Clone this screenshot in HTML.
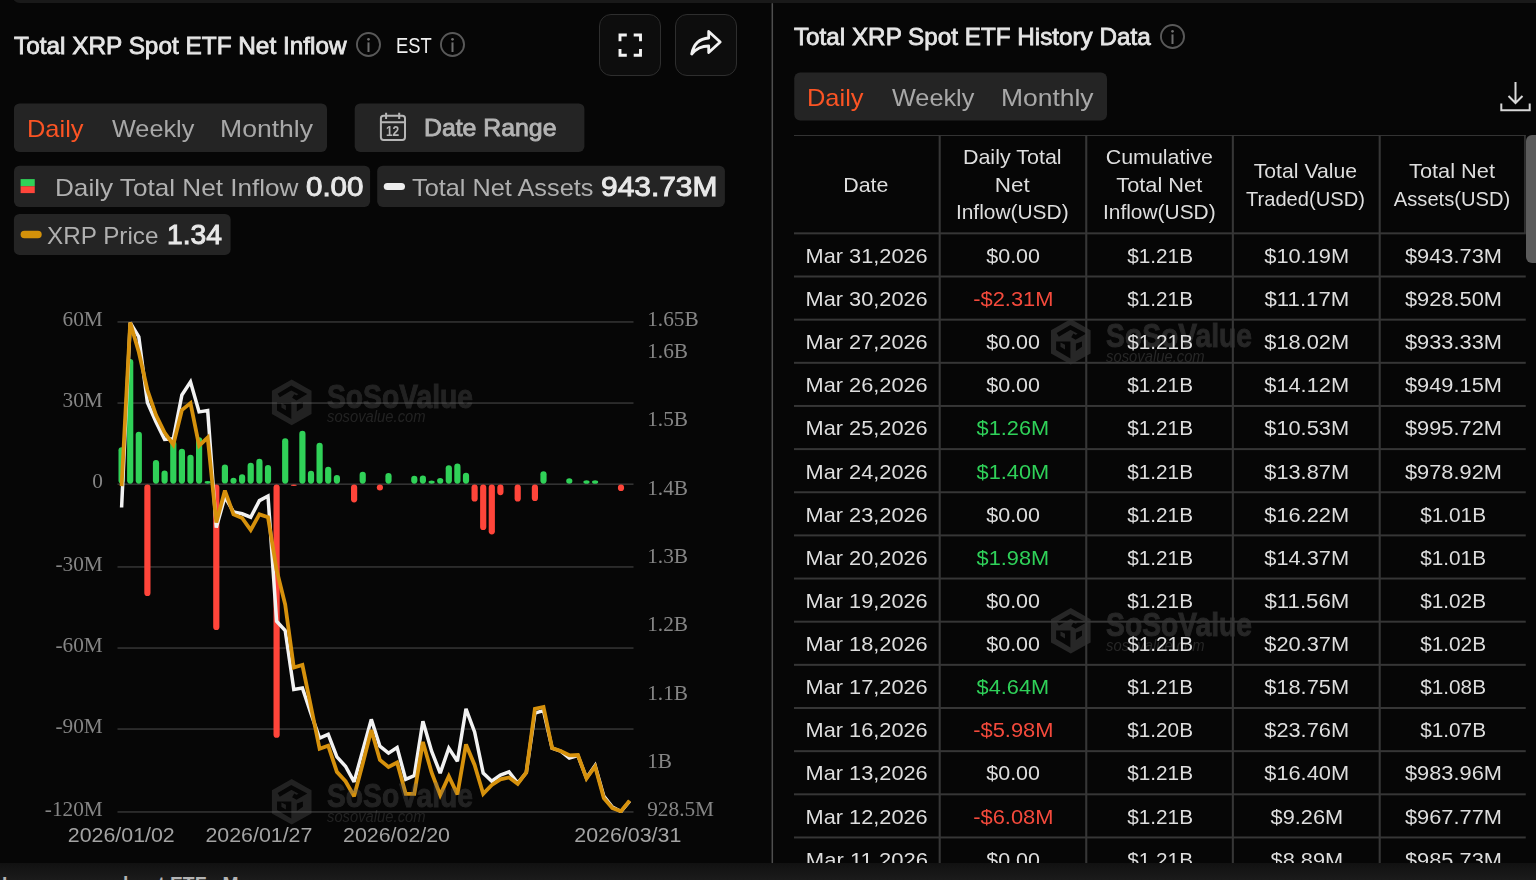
<!DOCTYPE html>
<html lang="en"><head><meta charset="utf-8"><title>Total XRP Spot ETF Net Inflow</title>
<style>
*{box-sizing:border-box;margin:0;padding:0}
html,body{width:1536px;height:880px;overflow:hidden;background:#060606}
body{position:relative;font-family:"Liberation Sans",sans-serif;color:#e4e4e4}
.abs{position:absolute}
.topbar{position:absolute;left:12px;top:-6px;width:1540px;height:9px;background:#191919;border-radius:0 0 0 8px}
.botbar{position:absolute;left:0;top:862.5px;width:1536px;height:20px;background:linear-gradient(#111111,#1b1b1b 17px);z-index:20}
.vdiv{position:absolute;left:771.6px;top:3px;width:1.8px;height:860px;background:#363636}
.t{position:absolute;z-index:3;font-weight:normal;white-space:nowrap;line-height:1;transform-origin:0 0;font-family:"Liberation Sans",sans-serif}
.b{font-weight:bold}
.pill{position:absolute;background:#242424;border-radius:5px}
.ibtn{position:absolute;width:62px;height:62px;top:14px;border:1.5px solid #2e2e2e;border-radius:12px;background:#0d0d0d}
.ibtn svg{position:absolute;left:0;top:0}
.info{position:absolute;width:25px;height:25px}
svg.chart{position:absolute;left:0;top:270px}
svg .ax{font-family:"Liberation Serif",serif;font-size:21.3px;fill:#858585}
svg .axx{font-family:"Liberation Sans",sans-serif;font-size:19.8px;fill:#a3a3a3}
svg .wm1{font-family:"Liberation Sans",sans-serif;font-weight:bold;font-size:32.6px}
svg .wm2{font-family:"Liberation Sans",sans-serif;font-style:italic;font-size:16.3px}
svg.twm{position:absolute;z-index:0}
.tblwrap{position:absolute;left:794.25px;top:135.4px;width:742px;height:740px;overflow:hidden}
table.hist{border-collapse:collapse;table-layout:fixed;width:731.75px;position:relative;z-index:2}
table.hist th,table.hist td{border:0;text-align:center;font-weight:normal;font-size:20.9px;color:#dedede;padding:0}
table.hist th{height:98.35px;line-height:27.7px;vertical-align:middle;padding-top:0}
.hl{display:block;white-space:nowrap;position:relative;left:-0.9px}
.cv{display:inline-block;white-space:nowrap}
table.hist td{height:43.15px;line-height:24px;vertical-align:middle;padding-top:1px}
table.hist td.neg{color:#f44a3c}
table.hist td.pos{color:#2fd159}
svg.tlines{position:absolute;left:0;top:0;z-index:3}
.sbar{position:absolute;left:1525.6px;top:134.5px;width:16px;height:128.5px;background:#5b5b5b;border-radius:6px;z-index:5}

section{will-change:transform}

</style></head>
<body>
<div class="topbar"></div>
<svg class="abs" style="left:760px;top:0" width="24" height="864" viewBox="0 0 24 864"><rect x="11.55" y="3.2" width="1.5" height="860" fill="#4e4e4e"/></svg>

<!-- pills / legend markers -->
<svg class="abs" style="left:0;top:0" width="1536" height="270" viewBox="0 0 1536 270"><rect x="13.95" y="103.4" width="313.05" height="48.50" rx="5.6" fill="#242424"/><rect x="354.7" y="103.4" width="229.70" height="48.50" rx="5.6" fill="#242424"/><rect x="14" y="165.7" width="356.10" height="41.20" rx="5.6" fill="#242424"/><rect x="377.2" y="165.7" width="347.70" height="41.20" rx="5.6" fill="#242424"/><rect x="13.9" y="213.9" width="216.70" height="41.10" rx="5.6" fill="#242424"/><rect x="794.25" y="72.4" width="312.75" height="48.10" rx="6" fill="#242424"/><rect x="20.6" y="179.1" width="14.15" height="7.15" fill="#30d158"/><rect x="20.6" y="186.25" width="14.15" height="6.85" fill="#ff453a"/><rect x="383.75" y="182.9" width="21.25" height="7.1" rx="3.55" fill="#ededed"/><rect x="20.6" y="230.75" width="21.1" height="7.5" rx="3.75" fill="#d4920a"/></svg>
<!-- LEFT PANEL -->
<section class="left">
<h2 class="t" style="left:14.25px;top:33.50px;font-size:24.0px;color:#e6e6e6;transform:scaleX(1.0149);-webkit-text-stroke:0.8px #e6e6e6">Total XRP Spot ETF Net Inflow</h2>
<span class="t" style="left:396.38px;top:34.55px;font-size:22.5px;color:#f0f0f0;transform:scaleX(0.8158)">EST</span>
<span class="t" style="left:27.32px;top:117.28px;font-size:24.0px;color:#fb5424;transform:scaleX(1.0594)">Daily</span>
<span class="t" style="left:111.65px;top:117.28px;font-size:24.0px;color:#a8a8a8;transform:scaleX(1.0514)">Weekly</span>
<span class="t" style="left:219.99px;top:117.28px;font-size:24.0px;color:#a8a8a8;transform:scaleX(1.1068)">Monthly</span>
<span class="t" style="left:424.47px;top:116.16px;font-size:24.0px;color:#b4b4b4;transform:scaleX(1.0340);-webkit-text-stroke:0.9px #b4b4b4">Date Range</span>
<span class="t" style="left:55.21px;top:176.56px;font-size:23.2px;color:#b0b0b0;transform:scaleX(1.1266)">Daily Total Net Inflow</span>
<span class="t" style="left:306.10px;top:172.91px;font-size:28.0px;color:#e8e8e8;transform:scaleX(1.0536);-webkit-text-stroke:1.0px #e8e8e8">0.00</span>
<span class="t" style="left:412.25px;top:176.56px;font-size:23.2px;color:#b0b0b0;transform:scaleX(1.0910)">Total Net Assets</span>
<span class="t" style="left:600.93px;top:172.52px;font-size:28.0px;color:#e8e8e8;transform:scaleX(1.0681);-webkit-text-stroke:1.0px #e8e8e8">943.73M</span>
<span class="t" style="left:47.48px;top:224.97px;font-size:23.2px;color:#b0b0b0;transform:scaleX(1.0463)">XRP Price</span>
<span class="t" style="left:167.34px;top:220.80px;font-size:28.0px;color:#e8e8e8;transform:scaleX(1.0081);-webkit-text-stroke:1.0px #e8e8e8">1.34</span>
  <svg class="info" style="left:356px;top:32.4px" viewBox="0 0 25 25"><circle cx="12.5" cy="12.5" r="11.55" fill="none" stroke="#595959" stroke-width="1.9"/><rect x="11.5" y="10.4" width="2" height="9.6" fill="#707070"/><circle cx="12.5" cy="7.3" r="1.35" fill="#707070"/></svg>
  <svg class="info" style="left:439.7px;top:32.4px" viewBox="0 0 25 25"><circle cx="12.5" cy="12.5" r="11.55" fill="none" stroke="#595959" stroke-width="1.9"/><rect x="11.5" y="10.4" width="2" height="9.6" fill="#707070"/><circle cx="12.5" cy="7.3" r="1.35" fill="#707070"/></svg>

  <div class="ibtn" style="left:599.3px">
    <svg width="60" height="60" viewBox="0 0 60 60"><path d="M20 26.3V20h6.8 M33.7 20H40.5v6.3 M40.5 34V40.3h-6.8 M26.8 40.3H20v-6.3" fill="none" stroke="#f2f2f2" stroke-width="2.9"/></svg>
  </div>
  <div class="ibtn" style="left:675px">
    <svg width="60" height="60" viewBox="1.3 1 60 60"><path d="M17 40 C19 30 25 24.5 34 24 V17.5 L45.5 28 L34 38.5 V32 C27 32 21.5 34.5 17 40 Z" fill="none" stroke="#f2f2f2" stroke-width="2.8" stroke-linejoin="round"/></svg>
  </div>
  <svg class="abs" style="left:378px;top:112px;z-index:3" width="30" height="30" viewBox="0 0 30 30"><rect x="2.9" y="3.7" width="24.1" height="24.2" rx="2.6" fill="none" stroke="#b6b6b6" stroke-width="2"/><path d="M2.9 10.3H27 M8.1 0.8V6.9 M21.2 0.8V6.9" stroke="#b6b6b6" stroke-width="2" fill="none"/><text x="7.9" y="23.9" textLength="13.3" lengthAdjust="spacingAndGlyphs" style="font-family:'Liberation Sans',sans-serif;font-size:14.6px;font-weight:bold" fill="#b6b6b6">12</text></svg>

<svg class="chart" width="772" height="600" viewBox="0 270 772 600">
<rect x="117.5" y="321.3" width="516" height="1.3" fill="#3d3d3d"/>
<rect x="117.5" y="402.4" width="516" height="1.3" fill="#3d3d3d"/>
<rect x="117.5" y="483.5" width="516" height="1.3" fill="#3d3d3d"/>
<rect x="117.5" y="566.3" width="516" height="1.3" fill="#3d3d3d"/>
<rect x="117.5" y="647.4" width="516" height="1.3" fill="#3d3d3d"/>
<rect x="117.5" y="728.4" width="516" height="1.3" fill="#3d3d3d"/>
<rect x="117.5" y="811.3" width="516" height="1.3" fill="#3d3d3d"/>
<rect x="118.5" y="447.2" width="6.2" height="36.5" rx="3.1" ry="3.1" fill="#30d158"/>
<rect x="127.1" y="359.1" width="6.2" height="124.6" rx="3.1" ry="3.1" fill="#30d158"/>
<rect x="135.7" y="431.7" width="6.2" height="52.0" rx="3.1" ry="3.1" fill="#30d158"/>
<rect x="144.3" y="484.6" width="6.2" height="111.4" rx="3.1" ry="3.1" fill="#ff453a"/>
<rect x="152.9" y="460.1" width="6.2" height="23.6" rx="3.1" ry="3.1" fill="#30d158"/>
<rect x="161.5" y="470.6" width="6.2" height="13.1" rx="3.1" ry="3.1" fill="#30d158"/>
<rect x="170.2" y="440.7" width="6.2" height="43.0" rx="3.1" ry="3.1" fill="#30d158"/>
<rect x="178.8" y="448.7" width="6.2" height="35.0" rx="3.1" ry="3.1" fill="#30d158"/>
<rect x="187.4" y="454.7" width="6.2" height="29.0" rx="3.1" ry="3.1" fill="#30d158"/>
<rect x="196.0" y="437.2" width="6.2" height="46.5" rx="3.1" ry="3.1" fill="#30d158"/>
<rect x="204.6" y="480.9" width="6.2" height="2.8" rx="3.1" ry="1.4" fill="#30d158"/>
<rect x="213.2" y="484.6" width="6.2" height="145.4" rx="3.1" ry="3.1" fill="#ff453a"/>
<rect x="221.8" y="464.4" width="6.2" height="19.2" rx="3.1" ry="3.1" fill="#30d158"/>
<rect x="230.4" y="477.8" width="6.2" height="5.9" rx="3.1" ry="3.0" fill="#30d158"/>
<rect x="239.0" y="474.3" width="6.2" height="9.4" rx="3.1" ry="3.1" fill="#30d158"/>
<rect x="247.6" y="462.8" width="6.2" height="20.9" rx="3.1" ry="3.1" fill="#30d158"/>
<rect x="256.3" y="458.8" width="6.2" height="24.9" rx="3.1" ry="3.1" fill="#30d158"/>
<rect x="264.9" y="464.9" width="6.2" height="18.8" rx="3.1" ry="3.1" fill="#30d158"/>
<rect x="273.5" y="484.6" width="6.2" height="253.2" rx="3.1" ry="3.1" fill="#ff453a"/>
<rect x="282.1" y="438.3" width="6.2" height="45.4" rx="3.1" ry="3.1" fill="#30d158"/>
<rect x="290.7" y="484.6" width="6.2" height="1.5" rx="3.1" ry="0.8" fill="#ff453a"/>
<rect x="299.3" y="430.8" width="6.2" height="52.9" rx="3.1" ry="3.1" fill="#30d158"/>
<rect x="307.9" y="470.8" width="6.2" height="12.9" rx="3.1" ry="3.1" fill="#30d158"/>
<rect x="316.5" y="442.7" width="6.2" height="41.0" rx="3.1" ry="3.1" fill="#30d158"/>
<rect x="325.1" y="466.8" width="6.2" height="16.9" rx="3.1" ry="3.1" fill="#30d158"/>
<rect x="333.8" y="475.0" width="6.2" height="8.7" rx="3.1" ry="3.1" fill="#30d158"/>
<rect x="351.0" y="484.6" width="6.2" height="17.8" rx="3.1" ry="3.1" fill="#ff453a"/>
<rect x="359.6" y="471.8" width="6.2" height="11.9" rx="3.1" ry="3.1" fill="#30d158"/>
<rect x="376.8" y="484.6" width="6.2" height="5.9" rx="3.1" ry="3.0" fill="#ff453a"/>
<rect x="385.4" y="473.1" width="6.2" height="10.6" rx="3.1" ry="3.1" fill="#30d158"/>
<rect x="411.2" y="475.8" width="6.2" height="7.9" rx="3.1" ry="3.1" fill="#30d158"/>
<rect x="419.8" y="475.6" width="6.2" height="8.1" rx="3.1" ry="3.1" fill="#30d158"/>
<rect x="428.5" y="480.5" width="6.2" height="3.2" rx="3.1" ry="1.6" fill="#30d158"/>
<rect x="437.1" y="478.0" width="6.2" height="5.7" rx="3.1" ry="2.9" fill="#30d158"/>
<rect x="445.7" y="465.2" width="6.2" height="18.5" rx="3.1" ry="3.1" fill="#30d158"/>
<rect x="454.3" y="463.6" width="6.2" height="20.1" rx="3.1" ry="3.1" fill="#30d158"/>
<rect x="462.9" y="472.7" width="6.2" height="11.0" rx="3.1" ry="3.1" fill="#30d158"/>
<rect x="471.5" y="484.6" width="6.2" height="16.9" rx="3.1" ry="3.1" fill="#ff453a"/>
<rect x="480.1" y="484.6" width="6.2" height="45.5" rx="3.1" ry="3.1" fill="#ff453a"/>
<rect x="488.7" y="484.6" width="6.2" height="49.8" rx="3.1" ry="3.1" fill="#ff453a"/>
<rect x="497.3" y="484.6" width="6.2" height="10.6" rx="3.1" ry="3.1" fill="#ff453a"/>
<rect x="514.6" y="484.6" width="6.2" height="16.9" rx="3.1" ry="3.1" fill="#ff453a"/>
<rect x="531.8" y="484.6" width="6.2" height="16.5" rx="3.1" ry="3.1" fill="#ff453a"/>
<rect x="540.4" y="471.2" width="6.2" height="12.5" rx="3.1" ry="3.1" fill="#30d158"/>
<rect x="566.2" y="478.3" width="6.2" height="5.4" rx="3.1" ry="2.7" fill="#30d158"/>
<rect x="583.4" y="480.2" width="6.2" height="3.5" rx="3.1" ry="1.8" fill="#30d158"/>
<rect x="592.0" y="480.2" width="6.2" height="3.5" rx="3.1" ry="1.8" fill="#30d158"/>
<rect x="617.9" y="484.6" width="6.2" height="6.5" rx="3.1" ry="3.1" fill="#ff453a"/>
<clipPath id="gc"><rect x="110" y="320.9" width="530" height="492"/></clipPath><g clip-path="url(#gc)">
<polyline fill="none" stroke="#f2f2f2" stroke-width="3.5" stroke-linejoin="miter" stroke-miterlimit="2.6" points="121.6,507.5 130.2,322.6 138.8,336.9 147.4,402.5 156.0,422.0 164.6,439.4 173.3,438.8 181.9,395.0 190.5,381.9 199.1,411.9 207.7,410.6 216.3,527.5 224.9,497.0 233.5,511.9 242.1,513.8 250.7,517.2 259.4,500.6 268.0,496.0 276.6,621.2 285.2,630.6 293.8,689.4 302.4,688.0 311.0,713.8 319.6,738.1 328.2,734.4 336.9,756.9 345.5,766.2 354.1,781.9 362.7,750.6 371.3,719.4 379.9,746.2 388.5,753.1 397.1,747.5 405.7,779.4 414.3,775.6 422.9,721.2 431.6,751.2 440.2,773.1 448.8,748.1 457.4,761.2 466.0,708.8 474.6,731.9 483.2,773.1 491.8,781.2 500.4,775.0 509.0,771.9 517.7,783.1 526.3,772.5 534.9,713.1 543.5,710.6 552.1,748.1 560.7,751.2 569.3,758.1 577.9,755.6 586.5,778.1 595.1,765.6 603.8,796.2 612.4,807.0 621.0,811.5 629.6,801.2"/>
<polyline fill="none" stroke="#d6910c" stroke-width="3.8" stroke-linejoin="miter" stroke-miterlimit="2.6" points="121.6,486.2 130.2,322.6 138.8,352.0 147.4,390.0 156.0,415.0 164.6,432.5 173.3,444.7 181.9,410.0 190.5,403.1 199.1,445.7 207.7,437.6 216.3,522.5 224.9,490.6 233.5,514.4 242.1,518.0 250.7,530.0 259.4,514.4 268.0,517.2 276.6,570.0 285.2,604.5 293.8,667.5 302.4,665.0 311.0,706.9 319.6,748.8 328.2,745.6 336.9,771.9 345.5,781.2 354.1,796.2 362.7,763.8 371.3,730.0 379.9,760.0 388.5,766.9 397.1,762.5 405.7,793.8 414.3,793.8 422.9,741.9 431.6,772.5 440.2,795.0 448.8,776.2 457.4,794.4 466.0,744.4 474.6,765.0 483.2,793.8 491.8,785.0 500.4,779.4 509.0,777.5 517.7,783.8 526.3,772.5 534.9,708.8 543.5,706.9 552.1,748.1 560.7,751.0 569.3,755.3 577.9,755.0 586.5,778.4 595.1,766.5 603.8,798.1 612.4,808.1 621.0,811.2 629.6,800.6"/>
</g>
<g transform="translate(271.9,379.6)" opacity="0.3"><mask id="wmk1" maskUnits="userSpaceOnUse" x="-1" y="-1" width="42" height="48"><polygon points="19.8,0 39.6,11.2 39.6,34.4 19.8,45.6 0,34.4 0,11.2" fill="#fff"/><polyline points="6.8,15.9 19.4,8.4 31,14.5 24.6,18.3 21.3,16.4" fill="none" stroke="#000" stroke-width="4.3" stroke-linejoin="miter"/><polygon points="5.1,22.4 19.4,22.4 19.4,39.4 5.1,30.9" fill="#000"/><polygon points="9.5,23.4 14,25.8 14,30.6 9.5,27.8" fill="#fff"/><polygon points="24.9,24.4 31,22.4 31,27.8 24.9,31.9" fill="#000"/></mask><rect x="-1" y="-1" width="42" height="48" fill="#646464" mask="url(#wmk1)"/><text x="55.1" y="27.9" class="wm1" fill="#646464" stroke="#646464" stroke-width="1" textLength="146" lengthAdjust="spacingAndGlyphs">SoSoValue</text><text x="55.1" y="42.7" class="wm2" fill="#646464" textLength="98.6" lengthAdjust="spacingAndGlyphs">sosovalue.com</text></g>
<g transform="translate(271.9,779)" opacity="0.3"><mask id="wmk2" maskUnits="userSpaceOnUse" x="-1" y="-1" width="42" height="48"><polygon points="19.8,0 39.6,11.2 39.6,34.4 19.8,45.6 0,34.4 0,11.2" fill="#fff"/><polyline points="6.8,15.9 19.4,8.4 31,14.5 24.6,18.3 21.3,16.4" fill="none" stroke="#000" stroke-width="4.3" stroke-linejoin="miter"/><polygon points="5.1,22.4 19.4,22.4 19.4,39.4 5.1,30.9" fill="#000"/><polygon points="9.5,23.4 14,25.8 14,30.6 9.5,27.8" fill="#fff"/><polygon points="24.9,24.4 31,22.4 31,27.8 24.9,31.9" fill="#000"/></mask><rect x="-1" y="-1" width="42" height="48" fill="#646464" mask="url(#wmk2)"/><text x="55.1" y="27.9" class="wm1" fill="#646464" stroke="#646464" stroke-width="1" textLength="146" lengthAdjust="spacingAndGlyphs">SoSoValue</text><text x="55.1" y="42.7" class="wm2" fill="#646464" textLength="98.6" lengthAdjust="spacingAndGlyphs">sosovalue.com</text></g>
<text x="102.8" y="326.1" text-anchor="end" class="ax">60M</text>
<text x="102.8" y="407.2" text-anchor="end" class="ax">30M</text>
<text x="102.8" y="488.3" text-anchor="end" class="ax">0</text>
<text x="102.8" y="571.1" text-anchor="end" class="ax">-30M</text>
<text x="102.8" y="652.2" text-anchor="end" class="ax">-60M</text>
<text x="102.8" y="733.2" text-anchor="end" class="ax">-90M</text>
<text x="102.8" y="816.1" text-anchor="end" class="ax">-120M</text>
<text x="647.2" y="326.1" class="ax">1.65B</text>
<text x="647.2" y="357.9" class="ax">1.6B</text>
<text x="647.2" y="426.2" class="ax">1.5B</text>
<text x="647.2" y="494.6" class="ax">1.4B</text>
<text x="647.2" y="563.0" class="ax">1.3B</text>
<text x="647.2" y="631.4" class="ax">1.2B</text>
<text x="647.2" y="699.8" class="ax">1.1B</text>
<text x="647.2" y="768.2" class="ax">1B</text>
<text x="647.2" y="816.1" class="ax">928.5M</text>
<text x="67.75" y="842.3" class="axx" textLength="107" lengthAdjust="spacingAndGlyphs">2026/01/02</text>
<text x="205.40" y="842.3" class="axx" textLength="107" lengthAdjust="spacingAndGlyphs">2026/01/27</text>
<text x="343.00" y="842.3" class="axx" textLength="107" lengthAdjust="spacingAndGlyphs">2026/02/20</text>
<text x="574.30" y="842.3" class="axx" textLength="107" lengthAdjust="spacingAndGlyphs">2026/03/31</text>
</svg>
</section>

<!-- RIGHT PANEL -->
<section class="right">
<h2 class="t" style="left:794.25px;top:24.98px;font-size:24.0px;color:#e6e6e6;transform:scaleX(1.0102);-webkit-text-stroke:0.8px #e6e6e6">Total XRP Spot ETF History Data</h2>
<span class="t" style="left:806.87px;top:85.88px;font-size:24.0px;color:#fb5424;transform:scaleX(1.0594)">Daily</span>
<span class="t" style="left:891.70px;top:85.88px;font-size:24.0px;color:#a8a8a8;transform:scaleX(1.0514)">Weekly</span>
<span class="t" style="left:1000.97px;top:85.89px;font-size:24.0px;color:#a8a8a8;transform:scaleX(1.1015)">Monthly</span>
  <svg class="info" style="left:1160px;top:23.5px" viewBox="0 0 25 25"><circle cx="12.5" cy="12.5" r="11.55" fill="none" stroke="#595959" stroke-width="1.9"/><rect x="11.5" y="10.4" width="2" height="9.6" fill="#707070"/><circle cx="12.5" cy="7.3" r="1.35" fill="#707070"/></svg>
  <svg class="abs" style="left:1498px;top:79px" width="36" height="36" viewBox="0 0 36 36"><path d="M17.5 3V23.5 M10.5 17 L17.5 24 L24.5 17 M3.3 24.5V31.3H31.7V24.5" fill="none" stroke="#d8d8d8" stroke-width="2"/></svg>
  <svg class="twm" style="left:1051.25px;top:319.4px" width="220" height="50" viewBox="0 0 220 50"><g transform="translate(0,0)" opacity="1"><mask id="wmk3" maskUnits="userSpaceOnUse" x="-1" y="-1" width="42" height="48"><polygon points="19.8,0 39.6,11.2 39.6,34.4 19.8,45.6 0,34.4 0,11.2" fill="#fff"/><polyline points="6.8,15.9 19.4,8.4 31,14.5 24.6,18.3 21.3,16.4" fill="none" stroke="#000" stroke-width="4.3" stroke-linejoin="miter"/><polygon points="5.1,22.4 19.4,22.4 19.4,39.4 5.1,30.9" fill="#000"/><polygon points="9.5,23.4 14,25.8 14,30.6 9.5,27.8" fill="#fff"/><polygon points="24.9,24.4 31,22.4 31,27.8 24.9,31.9" fill="#000"/></mask><rect x="-1" y="-1" width="42" height="48" fill="#272727" mask="url(#wmk3)"/><text x="55.1" y="27.9" class="wm1" fill="#272727" stroke="#272727" stroke-width="1" textLength="146" lengthAdjust="spacingAndGlyphs">SoSoValue</text><text x="55.1" y="42.7" class="wm2" fill="#272727" textLength="98.6" lengthAdjust="spacingAndGlyphs">sosovalue.com</text></g></svg>
  <svg class="twm" style="left:1051.25px;top:607.5px" width="220" height="50" viewBox="0 0 220 50"><g transform="translate(0,0)" opacity="1"><mask id="wmk4" maskUnits="userSpaceOnUse" x="-1" y="-1" width="42" height="48"><polygon points="19.8,0 39.6,11.2 39.6,34.4 19.8,45.6 0,34.4 0,11.2" fill="#fff"/><polyline points="6.8,15.9 19.4,8.4 31,14.5 24.6,18.3 21.3,16.4" fill="none" stroke="#000" stroke-width="4.3" stroke-linejoin="miter"/><polygon points="5.1,22.4 19.4,22.4 19.4,39.4 5.1,30.9" fill="#000"/><polygon points="9.5,23.4 14,25.8 14,30.6 9.5,27.8" fill="#fff"/><polygon points="24.9,24.4 31,22.4 31,27.8 24.9,31.9" fill="#000"/></mask><rect x="-1" y="-1" width="42" height="48" fill="#272727" mask="url(#wmk4)"/><text x="55.1" y="27.9" class="wm1" fill="#272727" stroke="#272727" stroke-width="1" textLength="146" lengthAdjust="spacingAndGlyphs">SoSoValue</text><text x="55.1" y="42.7" class="wm2" fill="#272727" textLength="98.6" lengthAdjust="spacingAndGlyphs">sosovalue.com</text></g></svg>
  <div class="tblwrap">
<table class="hist"><colgroup><col style="width:145.7px"><col style="width:146.55px"><col style="width:146.6px"><col style="width:146.85px"><col style="width:146.05px"></colgroup>
<thead><tr>
<th><span class="hl" style="transform:scaleX(1.0247)">Date</span></th>
<th><span class="hl" style="transform:scaleX(1.0288)">Daily Total</span><span class="hl" style="transform:scaleX(1.0766)">Net</span><span class="hl" style="transform:scaleX(1.0005)">Inflow(USD)</span></th>
<th><span class="hl" style="transform:scaleX(1.0248)">Cumulative</span><span class="hl" style="transform:scaleX(1.0435)">Total Net</span><span class="hl" style="transform:scaleX(1.0005)">Inflow(USD)</span></th>
<th><span class="hl" style="transform:scaleX(1.0164)">Total Value</span><span class="hl" style="transform:scaleX(0.9632)">Traded(USD)</span></th>
<th><span class="hl" style="transform:scaleX(1.0423)">Total Net</span><span class="hl" style="transform:scaleX(0.9642)">Assets(USD)</span></th>
</tr></thead><tbody>
<tr><td><span class="cv" style="transform:scaleX(1.0410)">Mar 31,2026</span></td><td><span class="cv" style="transform:scaleX(1.0285)">$0.00</span></td><td><span class="cv" style="transform:scaleX(0.9947)">$1.21B</span></td><td><span class="cv" style="transform:scaleX(1.0428)">$10.19M</span></td><td><span class="cv" style="transform:scaleX(1.0442)">$943.73M</span></td></tr>
<tr><td><span class="cv" style="transform:scaleX(1.0410)">Mar 30,2026</span></td><td class="neg"><span class="cv" style="transform:scaleX(1.0476)">-$2.31M</span></td><td><span class="cv" style="transform:scaleX(0.9947)">$1.21B</span></td><td><span class="cv" style="transform:scaleX(1.0634)">$11.17M</span></td><td><span class="cv" style="transform:scaleX(1.0442)">$928.50M</span></td></tr>
<tr><td><span class="cv" style="transform:scaleX(1.0410)">Mar 27,2026</span></td><td><span class="cv" style="transform:scaleX(1.0285)">$0.00</span></td><td><span class="cv" style="transform:scaleX(0.9947)">$1.21B</span></td><td><span class="cv" style="transform:scaleX(1.0428)">$18.02M</span></td><td><span class="cv" style="transform:scaleX(1.0442)">$933.33M</span></td></tr>
<tr><td><span class="cv" style="transform:scaleX(1.0410)">Mar 26,2026</span></td><td><span class="cv" style="transform:scaleX(1.0285)">$0.00</span></td><td><span class="cv" style="transform:scaleX(0.9947)">$1.21B</span></td><td><span class="cv" style="transform:scaleX(1.0428)">$14.12M</span></td><td><span class="cv" style="transform:scaleX(1.0442)">$949.15M</span></td></tr>
<tr><td><span class="cv" style="transform:scaleX(1.0410)">Mar 25,2026</span></td><td class="pos"><span class="cv" style="transform:scaleX(1.0409)">$1.26M</span></td><td><span class="cv" style="transform:scaleX(0.9947)">$1.21B</span></td><td><span class="cv" style="transform:scaleX(1.0428)">$10.53M</span></td><td><span class="cv" style="transform:scaleX(1.0442)">$995.72M</span></td></tr>
<tr><td><span class="cv" style="transform:scaleX(1.0410)">Mar 24,2026</span></td><td class="pos"><span class="cv" style="transform:scaleX(1.0409)">$1.40M</span></td><td><span class="cv" style="transform:scaleX(0.9947)">$1.21B</span></td><td><span class="cv" style="transform:scaleX(1.0428)">$13.87M</span></td><td><span class="cv" style="transform:scaleX(1.0442)">$978.92M</span></td></tr>
<tr><td><span class="cv" style="transform:scaleX(1.0410)">Mar 23,2026</span></td><td><span class="cv" style="transform:scaleX(1.0285)">$0.00</span></td><td><span class="cv" style="transform:scaleX(0.9947)">$1.21B</span></td><td><span class="cv" style="transform:scaleX(1.0428)">$16.22M</span></td><td><span class="cv" style="transform:scaleX(0.9947)">$1.01B</span></td></tr>
<tr><td><span class="cv" style="transform:scaleX(1.0410)">Mar 20,2026</span></td><td class="pos"><span class="cv" style="transform:scaleX(1.0409)">$1.98M</span></td><td><span class="cv" style="transform:scaleX(0.9947)">$1.21B</span></td><td><span class="cv" style="transform:scaleX(1.0428)">$14.37M</span></td><td><span class="cv" style="transform:scaleX(0.9947)">$1.01B</span></td></tr>
<tr><td><span class="cv" style="transform:scaleX(1.0410)">Mar 19,2026</span></td><td><span class="cv" style="transform:scaleX(1.0285)">$0.00</span></td><td><span class="cv" style="transform:scaleX(0.9947)">$1.21B</span></td><td><span class="cv" style="transform:scaleX(1.0634)">$11.56M</span></td><td><span class="cv" style="transform:scaleX(0.9947)">$1.02B</span></td></tr>
<tr><td><span class="cv" style="transform:scaleX(1.0410)">Mar 18,2026</span></td><td><span class="cv" style="transform:scaleX(1.0285)">$0.00</span></td><td><span class="cv" style="transform:scaleX(0.9947)">$1.21B</span></td><td><span class="cv" style="transform:scaleX(1.0428)">$20.37M</span></td><td><span class="cv" style="transform:scaleX(0.9947)">$1.02B</span></td></tr>
<tr><td><span class="cv" style="transform:scaleX(1.0410)">Mar 17,2026</span></td><td class="pos"><span class="cv" style="transform:scaleX(1.0409)">$4.64M</span></td><td><span class="cv" style="transform:scaleX(0.9947)">$1.21B</span></td><td><span class="cv" style="transform:scaleX(1.0428)">$18.75M</span></td><td><span class="cv" style="transform:scaleX(0.9947)">$1.08B</span></td></tr>
<tr><td><span class="cv" style="transform:scaleX(1.0410)">Mar 16,2026</span></td><td class="neg"><span class="cv" style="transform:scaleX(1.0476)">-$5.98M</span></td><td><span class="cv" style="transform:scaleX(0.9947)">$1.20B</span></td><td><span class="cv" style="transform:scaleX(1.0428)">$23.76M</span></td><td><span class="cv" style="transform:scaleX(0.9947)">$1.07B</span></td></tr>
<tr><td><span class="cv" style="transform:scaleX(1.0410)">Mar 13,2026</span></td><td><span class="cv" style="transform:scaleX(1.0285)">$0.00</span></td><td><span class="cv" style="transform:scaleX(0.9947)">$1.21B</span></td><td><span class="cv" style="transform:scaleX(1.0428)">$16.40M</span></td><td><span class="cv" style="transform:scaleX(1.0442)">$983.96M</span></td></tr>
<tr><td><span class="cv" style="transform:scaleX(1.0410)">Mar 12,2026</span></td><td class="neg"><span class="cv" style="transform:scaleX(1.0476)">-$6.08M</span></td><td><span class="cv" style="transform:scaleX(0.9947)">$1.21B</span></td><td><span class="cv" style="transform:scaleX(1.0409)">$9.26M</span></td><td><span class="cv" style="transform:scaleX(1.0442)">$967.77M</span></td></tr>
<tr><td><span class="cv" style="transform:scaleX(1.0551)">Mar 11,2026</span></td><td><span class="cv" style="transform:scaleX(1.0285)">$0.00</span></td><td><span class="cv" style="transform:scaleX(0.9947)">$1.21B</span></td><td><span class="cv" style="transform:scaleX(1.0409)">$8.89M</span></td><td><span class="cv" style="transform:scaleX(1.0442)">$985.73M</span></td></tr>
</tbody></table>
<svg class="tlines" width="742" height="740" viewBox="0 0 742 740"><rect x="-0.3" y="-0.85" width="732.05" height="1.7" fill="#3c3c3c"/><rect x="-0.3" y="97.35" width="732.05" height="2" fill="#363636"/><rect x="-0.3" y="140.50" width="732.05" height="2" fill="#363636"/><rect x="-0.3" y="183.65" width="732.05" height="2" fill="#363636"/><rect x="-0.3" y="226.80" width="732.05" height="2" fill="#363636"/><rect x="-0.3" y="269.95" width="732.05" height="2" fill="#363636"/><rect x="-0.3" y="313.10" width="732.05" height="2" fill="#363636"/><rect x="-0.3" y="356.25" width="732.05" height="2" fill="#363636"/><rect x="-0.3" y="399.40" width="732.05" height="2" fill="#363636"/><rect x="-0.3" y="442.55" width="732.05" height="2" fill="#363636"/><rect x="-0.3" y="485.70" width="732.05" height="2" fill="#363636"/><rect x="-0.3" y="528.85" width="732.05" height="2" fill="#363636"/><rect x="-0.3" y="572.00" width="732.05" height="2" fill="#363636"/><rect x="-0.3" y="615.15" width="732.05" height="2" fill="#363636"/><rect x="-0.3" y="658.30" width="732.05" height="2" fill="#363636"/><rect x="-0.3" y="701.45" width="732.05" height="2" fill="#363636"/><rect x="-0.3" y="744.60" width="732.05" height="2" fill="#363636"/><rect x="144.65" y="0" width="2.1" height="740" fill="#363636"/><rect x="291.20" y="0" width="2.1" height="740" fill="#363636"/><rect x="437.80" y="0" width="2.1" height="740" fill="#363636"/><rect x="584.65" y="0" width="2.1" height="740" fill="#363636"/><rect x="730.15" y="0" width="1.6" height="98.35" fill="#363636"/></svg>
  </div>
  <div class="sbar"></div>
</section>
<div class="botbar"><span class="t b" style="left:2.2px;top:11.3px;font-size:20px;color:#b4b4b4;transform:scaleX(0.963)">Learn more about ETFs M</span></div>

</body></html>
